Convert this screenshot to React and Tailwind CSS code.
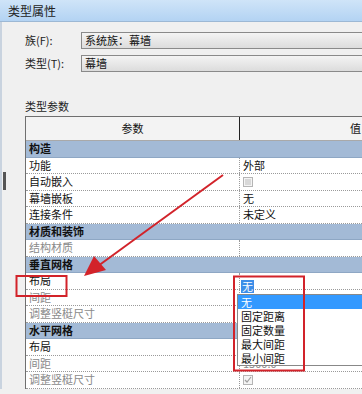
import React from "react";

const font = { fontFamily: '"Noto Sans CJK SC", "Noto Sans", sans-serif' };

const Section = ({ label }) => (
    <div className="flex h-[16.5px] bg-[#a3bad6] border-b border-[#8ea7c4] items-center">
        <span className="pl-[3px] text-[11px] font-bold text-[#111] leading-none">{label}</span>
    </div>
);

const Row = ({ label, value, dim, children }) => (
    <div className="flex h-[16.5px] bg-white border-b border-dotted border-[#9a9a9a] items-center">
        <div className={"w-[214px] h-full flex items-center pl-[3px] text-[11px] leading-none border-r border-dotted border-[#9a9a9a] " + (dim ? "text-[#8a8a8a]" : "text-[#111]")}>
            {label}
        </div>
        <div className="flex-1 h-full flex items-center pl-[3px] text-[11px] leading-none text-[#111]">
            {children || value}
        </div>
    </div>
);

const Check = ({ checked }) => (
    <div className="w-[10px] h-[10px] border border-[#b5b5b5] bg-[#f4f4f4] flex items-center justify-center">
        {checked ? (
            <svg width="8" height="8" viewBox="0 0 8 8">
                <path d="M1 4 L3 6 L7 1" stroke="#a0a0a0" strokeWidth="1.2" fill="none" />
            </svg>
        ) : (
            <div className="w-[6px] h-[6px] bg-[#d8d8d8]" />
        )}
    </div>
);

export default function App() {
    return (
        <div className="w-[362px] h-[394px] bg-[#f0f0f0] relative overflow-hidden" style={font}>
            <div className="h-[22px] bg-gradient-to-b from-[#cfe4f8] to-[#b3d3f3] border-b border-[#9db8d4] flex items-center pl-[8px]">
                <span className="text-[12px] text-[#222]">类型属性</span>
            </div>
            <div className="flex">
                <div className="w-[7px] flex flex-col border-l-2 border-[#c9d3df]">
                    <div className="h-[150px]" />
                    <div className="ml-[1px] w-[3px] h-[18px] bg-[#555]" />
                </div>
                <div className="flex-1 pl-[18px]">
                    <div className="flex items-center mt-[10px] h-[17px]">
                        <span className="w-[56px] text-[11px] text-[#222]">族(F):</span>
                        <div className="flex-1 -mr-[10px] h-[17px] border border-[#8a8a8a] bg-gradient-to-b from-[#f4f4f4] to-[#dcdcdc] flex items-center pl-[3px] text-[11px] text-[#111]">系统族：幕墙</div>
                    </div>
                    <div className="flex items-center mt-[6px] h-[17px]">
                        <span className="w-[56px] text-[11px] text-[#222]">类型(T):</span>
                        <div className="flex-1 -mr-[10px] h-[17px] border border-[#8a8a8a] bg-gradient-to-b from-[#f4f4f4] to-[#dcdcdc] flex items-center pl-[3px] text-[11px] text-[#111]">幕墙</div>
                    </div>
                    <div className="mt-[27px] h-[14px] text-[11px] leading-[14px] text-[#222]">类型参数</div>
                    <div className="mt-[3px] border-t border-l border-[#6f6f6f] -mr-[20px]">
                        <div className="flex h-[24px] bg-[#f3f3f3] border-b border-[#a9a9a9]">
                            <div className="w-[214px] border-r border-[#222] flex items-center justify-center text-[11px] text-[#111]">参数</div>
                            <div className="flex-1 flex items-center pl-[110px] text-[11px] text-[#111]">值</div>
                        </div>
                        <Section label="构造" />
                        <Row label="功能" value="外部" />
                        <Row label="自动嵌入"><Check /></Row>
                        <Row label="幕墙嵌板" value="无" />
                        <Row label="连接条件" value="未定义" />
                        <Section label="材质和装饰" />
                        <Row label="结构材质" dim value="" />
                        <Section label="垂直网格" />
                        <Row label="布局" value="" />
                        <Row label="间距" dim value="" />
                        <Row label="调整竖梃尺寸" dim value="" />
                        <Section label="水平网格" />
                        <Row label="布局" value="" />
                        <Row label="间距" dim><span className="text-[#8a8a8a]">1500.0</span></Row>
                        <Row label="调整竖梃尺寸" dim><Check checked /></Row>
                    </div>
                </div>
            </div>

            {/* dropdown list opened on 布局 */}
            <div className="absolute left-[240px] top-[278px] w-[130px] text-[11px] text-[#111]">
                <div className="h-[16px] flex items-center pl-[1px]">
                    <span className="bg-[#3d8ee8] text-white px-[1px] leading-[13px]">无</span>
                </div>
                <div className="bg-white border border-[#888] -ml-[3px]">
                    <div className="h-[14px] bg-[#3399ff] text-white flex items-center pl-[3px]">无</div>
                    <div className="h-[14px] flex items-center pl-[3px]">固定距离</div>
                    <div className="h-[14px] flex items-center pl-[3px]">固定数量</div>
                    <div className="h-[14px] flex items-center pl-[3px]">最大间距</div>
                    <div className="h-[14px] flex items-center pl-[3px]">最小间距</div>
                </div>
            </div>

            {/* annotations */}
            <svg className="absolute left-0 top-0 pointer-events-none" width="362" height="394">
                <line x1="223" y1="175" x2="98" y2="266" stroke="#d2232a" strokeWidth="2" />
                <polygon points="84,276 94,256 106,270" fill="#d2232a" />
                <rect x="16.5" y="276" width="50" height="20" fill="none" stroke="#d2232a" strokeWidth="2" />
                <rect x="234" y="276.5" width="70" height="94" fill="none" stroke="#d2232a" strokeWidth="2" />
            </svg>
        </div>
    );
}
